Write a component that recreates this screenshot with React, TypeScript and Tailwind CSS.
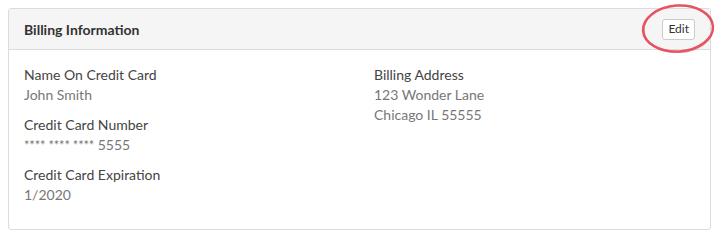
import React from "react";

function Field({ label, value }: { label: string; value: React.ReactNode }) {
  return (
    <div className="mb-[10px]">
      <div className="text-[14px] leading-[20px] text-[#444]">{label}</div>
      <div className="text-[14px] leading-[20px] text-[#777]">{value}</div>
    </div>
  );
}

export default function App() {
  return (
    <div className="relative w-[718px] h-[241px] bg-white p-[8px] pr-[7px]" style={{ fontFamily: "Lato, 'Open Sans', sans-serif" }}>
      <div className="border border-[#dcdcdc] rounded-[3px] h-[222px]">
        <div className="flex items-center justify-between h-[41px] bg-[#f5f5f5] border-b border-[#dcdcdc] pl-[15px] pr-[15px]">
          <div className="text-[14px] font-bold text-[#333]">Billing Information</div>
          <button className="h-[21px] px-[5px] text-[12px] leading-[18px] text-[#333] bg-white border border-[#ccc] rounded-[3px]">Edit</button>
        </div>
        <div className="grid grid-cols-[350px_1fr] pl-[15px] pt-[15px]">
          <div>
            <Field label="Name On Credit Card" value="John Smith" />
            <Field
              label="Credit Card Number"
              value={
                <>
                  <span className="text-[13px] tracking-[-0.2px]">**** **** ****</span> 5555
                </>
              }
            />
            <Field label="Credit Card Expiration" value="1/2020" />
          </div>
          <div>
            <div className="text-[14px] leading-[20px] text-[#444]">Billing Address</div>
            <div className="text-[14px] leading-[20px] text-[#777]">123 Wonder Lane</div>
            <div className="text-[14px] leading-[20px] text-[#777]">Chicago IL 55555</div>
          </div>
        </div>
      </div>
      <svg className="absolute left-0 top-0 pointer-events-none" width="718" height="241">
        <ellipse cx="678" cy="28.5" rx="35" ry="23" fill="none" stroke="#e23a48" strokeWidth="2.5" strokeOpacity="0.85" transform="rotate(-4 678 28.5)" />
        <ellipse cx="678.5" cy="29" rx="34.5" ry="23.5" fill="none" stroke="#e8505c" strokeWidth="1.2" strokeOpacity="0.6" transform="rotate(-2 678 29)" />
      </svg>
    </div>
  );
}
